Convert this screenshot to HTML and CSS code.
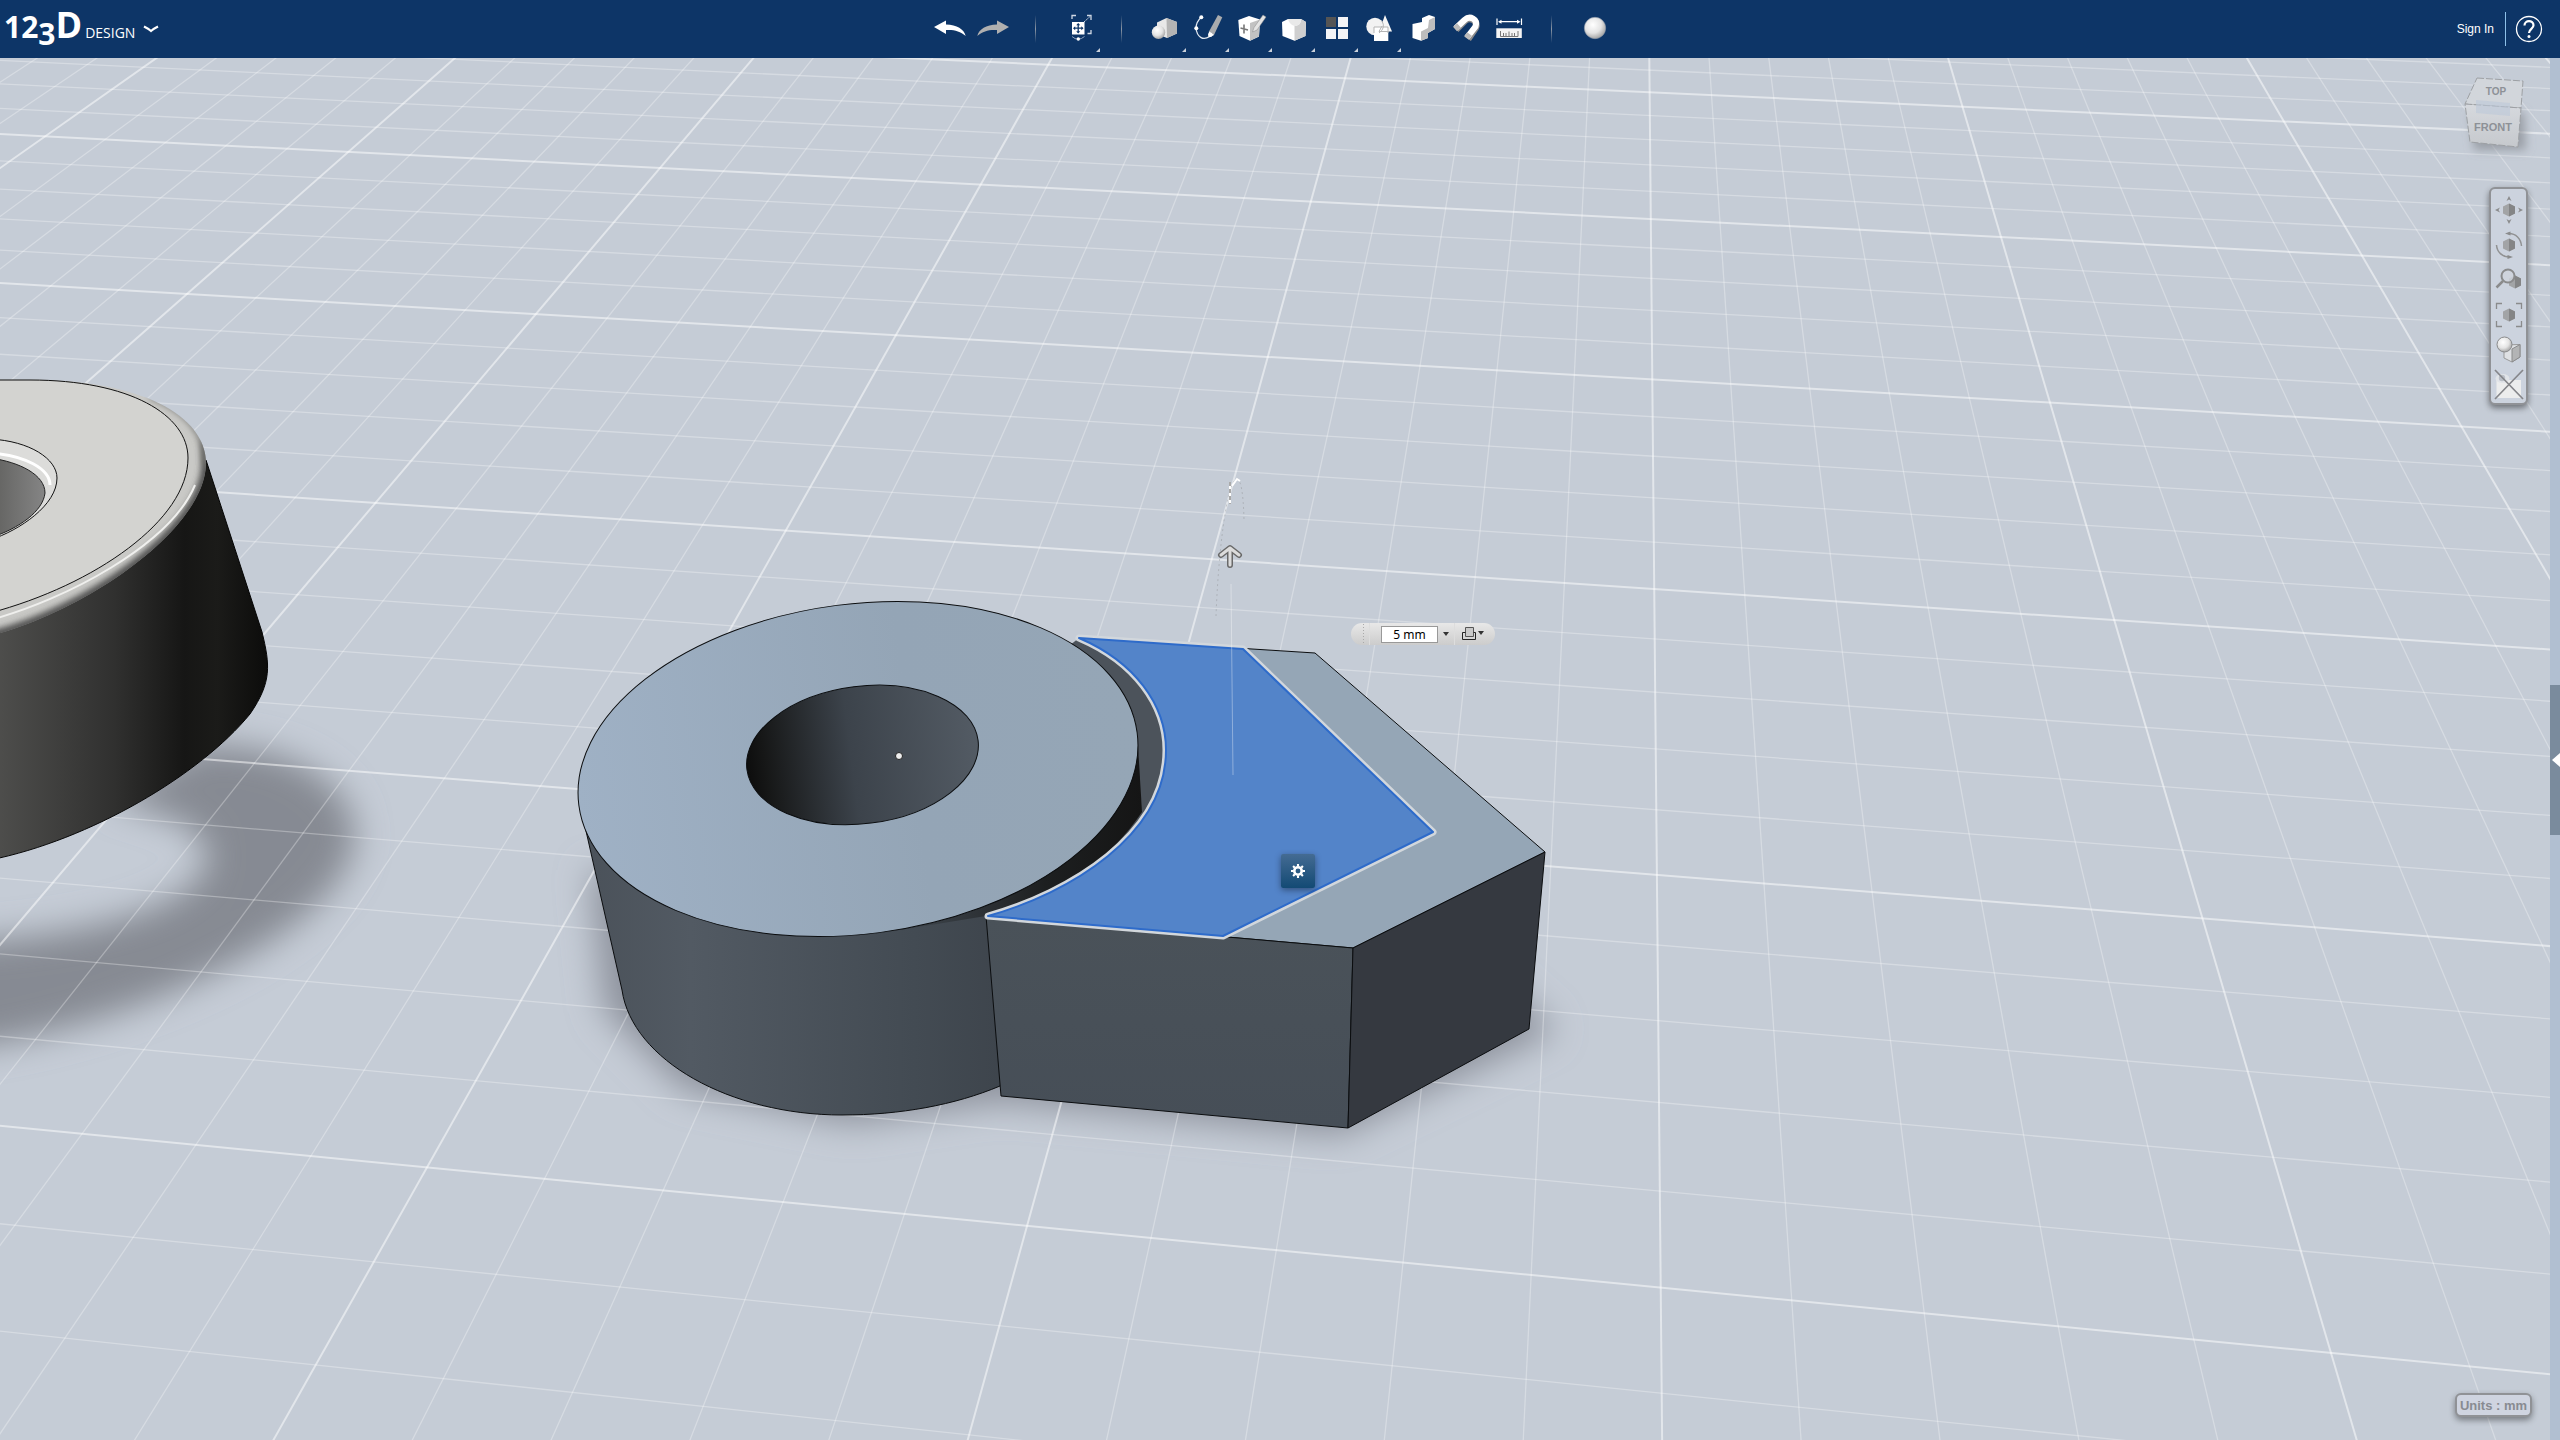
FILE: index.html
```html
<!DOCTYPE html>
<html lang="en">
<head>
    <meta charset="UTF-8">
    <meta name="viewport" content="width=device-width, initial-scale=1.0">
    <title>123D Design</title>
    <link rel="stylesheet" href="styles.css">
</head>
<body>
    <header class="topbar">
        <button class="brand" aria-label="123D Design menu">
            <span class="brand-num">12<span class="brand-low">3</span></span><span class="brand-d">D</span>
            <span class="brand-name">DESIGN</span>
            <svg class="brand-arrow" width="16" height="10" viewBox="0 0 16 10"><path d="M1 2.500Q5 4.500 8 7Q11 4.500 15 2.500" fill="none" stroke="#fff" stroke-width="2.200"/></svg>
        </button>

        <nav class="tools">
            <button class="tool" aria-label="Undo">
                <svg viewBox="0 0 36 36"><path d="M2 16L14 9.500V13.500C25 14 32 18 33.700 25C28 20 22 18.500 14 19V23Z" fill="#fff"/></svg>
            </button>
            <button class="tool" aria-label="Redo">
                <svg viewBox="0 0 36 36"><path d="M34 16L22 9.500V13.500C11 14 4 18 2.300 25C8 20 14 18.500 22 19V23Z" fill="#b0b0b0"/></svg>
            </button>
            <span class="sep"></span>
            <button class="tool has-menu" aria-label="Transform">
                <svg viewBox="0 0 36 36">
                    <path d="M11 8V4.500H15M26 4.500H30V9M30 19V22.500H26.500" fill="none" stroke="#cfd8e4" stroke-width="1.300"/>
                    <path d="M23 11L29 5.500" stroke="#cfd8e4" stroke-dasharray="2 1"/>
                    <rect x="11" y="11" width="12.500" height="12.500" fill="#fff"/>
                    <path d="M17.200 13v8.500M13 17.200h8.500" stroke="#0d3567" stroke-width="1.300"/>
                    <path d="M17.200 12l2 2.200h-4zM17.200 22.500l2-2.200h-4zM12 17.200l2.200-2v4zM22.500 17.200l-2.200-2v4z" fill="#0d3567"/>
                    <path d="M11 25.500Q17 31 23.500 25.500" fill="none" stroke="#8fa3bf"/>
                    <circle cx="17.300" cy="28" r="1.700" fill="#fff"/>
                </svg>
            </button>
            <span class="sep"></span>
            <button class="tool has-menu" aria-label="Primitives">
                <svg viewBox="0 0 36 36">
                    <path d="M19.500 7L30 11V22.500L20 27L10 23V11.500Z" fill="#e8e8e8"/>
                    <path d="M19.500 7L30 11V22.500L20 27Z" fill="#b4b4b4"/>
                    <circle cx="11.500" cy="21.300" r="6.700" fill="url(#ball)"/>
                </svg>
            </button>
            <button class="tool has-menu" aria-label="Sketch">
                <svg viewBox="0 0 36 36">
                    <path d="M11.300 6.300Q6 11 6 17.300C7 26 13 30 19.500 25.500" fill="none" stroke="#dfe6ef" stroke-width="1.300"/>
                    <path d="M28 4L32.300 6.300L24 24L18.500 26.500L19 20.500Z" fill="#a9abad"/>
                    <path d="M19 20.500L24 24L18.500 26.500Z" fill="#fff"/>
                    <circle cx="11.300" cy="6.300" r="2" fill="#fff"/>
                    <circle cx="6.300" cy="17.300" r="2" fill="#fff"/>
                    <circle cx="20.300" cy="23.700" r="2.200" fill="#fff"/>
                </svg>
            </button>
            <button class="tool has-menu" aria-label="Construct">
                <svg viewBox="0 0 36 36">
                    <path d="M16 5L27 8.500L26 25.500L17 29.700L6.500 25L5.300 9Z" fill="#fff"/>
                    <path d="M17 12L27 8.500L26 25.500L17 29.700Z" fill="#c2c2c2"/>
                    <path d="M11 13.500v9M7.500 17l7.500 2" stroke="#777" stroke-width="1.600"/>
                    <path d="M30 4L33 6L24 19L19.500 21L21 16.500Z" fill="#e4e4e4" stroke="#8b8b8b" stroke-width=".500"/>
                </svg>
            </button>
            <button class="tool has-menu" aria-label="Modify">
                <svg viewBox="0 0 36 36">
                    <path d="M6 11L12 8H25L30 11L29.500 25L18.500 29.700L6.500 25Z" fill="#fff"/>
                    <path d="M18.500 15C22 15 25 13 25 8L30 11L29.500 25L18.500 29.700Z" fill="#cfcfcf"/>
                    <path d="M12 8H25C25 13 22 15 18.500 15C15 14 12.500 11 12 8Z" fill="#e9e9e9"/>
                </svg>
            </button>
            <button class="tool has-menu" aria-label="Pattern">
                <svg viewBox="0 0 36 36">
                    <rect x="7" y="6" width="10" height="10" fill="#555"/>
                    <rect x="19" y="6" width="10" height="10" fill="#f4f4f6"/>
                    <rect x="7" y="18" width="10" height="10" fill="#f4f4f6"/>
                    <rect x="19" y="18" width="10" height="10" fill="#f4f4f6"/>
                </svg>
            </button>
            <button class="tool has-menu" aria-label="Grouping">
                <svg viewBox="0 0 36 36">
                    <circle cx="13" cy="15.500" r="8.700" fill="#f2f2f2"/>
                    <path d="M23 4L30 20.500H17Z" fill="#f6f6f6"/>
                    <rect x="12" y="16" width="14.300" height="14" fill="#fff"/>
                    <path d="M12 22V16H26V22M20 10Q24 17 17 22M20 15L17 20.500H27" fill="none" stroke="#b5b5b5"/>
                </svg>
            </button>
            <button class="tool" aria-label="Combine">
                <svg viewBox="0 0 36 36">
                    <path d="M17 7L24 4L30 6V18L23 22V27L16 29.700L7.500 27V13L17 11Z" fill="#fff"/>
                    <path d="M24 9L30 6V18L23 22V27L16 29.700V20.500L23 17Z" fill="#bdbdbd"/>
                </svg>
            </button>
            <button class="tool" aria-label="Snap">
                <svg viewBox="0 0 36 36">
                    <path d="M8 18.500L16.500 10C22 4.500 31 10 27.500 17L20 28" fill="none" stroke="#8a8a8a" stroke-width="7"/>
                    <path d="M8 17L16.500 9C22 4 30 8 27.500 15.500L19 26.500" fill="none" stroke="#fff" stroke-width="6"/>
                    <path d="M7 18L11 14.500M18.500 27L21.500 23" stroke="#bbb" stroke-width="6"/>
                </svg>
            </button>
            <button class="tool" aria-label="Measure">
                <svg viewBox="0 0 36 36">
                    <path d="M6 7.500v6.500M30.500 7.500v6.500M8 10.700h20" stroke="#fff" stroke-width="1.200"/>
                    <path d="M7 10.700l3.500-2v4zM29.500 10.700l-3.500-2v4z" fill="#fff"/>
                    <rect x="5.300" y="17.300" width="25.500" height="9.700" fill="#f4f4f4"/>
                    <path d="M9.500 20v5.500M12.500 22v3.500M15 22v3.500M18 20.500v5M21 22v3.500M23.500 22v3.500M27 20v5.500M9.500 25.500H27" stroke="#777" fill="none"/>
                </svg>
            </button>
            <span class="sep"></span>
            <button class="tool" aria-label="Material">
                <svg viewBox="0 0 36 36"><circle cx="18" cy="17" r="10.700" fill="url(#ball)" stroke="#8b97a8" stroke-width=".600"/></svg>
            </button>
        </nav>

        <div class="account">
            <a href="#signin">Sign In</a>
            <button class="help" aria-label="Help">
                <svg viewBox="0 0 28 28"><circle cx="14" cy="14" r="12.500" fill="none" stroke="#fff" stroke-width="1.300"/><path d="M9.500 10.500C9.500 4.800 18.500 4.800 18.500 10.300C18.500 13.800 14 14 14 18" fill="none" stroke="#fff" stroke-width="2.200"/><circle cx="14" cy="21.500" r="1.500" fill="#fff"/></svg>
            </button>
        </div>
    </header>

    <main class="workspace">
        <section class="canvas">
            <svg class="scene" viewBox="0 58 2550 1382" preserveAspectRatio="xMinYMin slice">
                <defs>
                    <radialGradient id="ball" cx=".4" cy=".35" r=".65"><stop offset="0" stop-color="#fff"/><stop offset=".6" stop-color="#e4e4e4"/><stop offset="1" stop-color="#a8a8a8"/></radialGradient>
                    <linearGradient id="blackSide"><stop offset="0" stop-color="#50504e"/><stop offset=".45" stop-color="#30302f"/><stop offset=".7" stop-color="#161615"/><stop offset=".82" stop-color="#1b1b19"/><stop offset="1" stop-color="#0c0c0b"/></linearGradient>
                    <linearGradient id="blackHole"><stop offset="0" stop-color="#60605e"/><stop offset="1" stop-color="#858585"/></linearGradient>
                    <linearGradient id="side"><stop offset="0" stop-color="#4a5159"/><stop offset=".2" stop-color="#525a63"/><stop offset=".6" stop-color="#434b53"/><stop offset="1" stop-color="#363b42"/></linearGradient>
                    <linearGradient id="top"><stop offset="0" stop-color="#9fb1c5"/><stop offset=".6" stop-color="#94a5b6"/><stop offset="1" stop-color="#95a6b6"/></linearGradient>
                    <linearGradient id="hole"><stop offset="0" stop-color="#0d0d0d"/><stop offset=".08" stop-color="#161717"/><stop offset=".45" stop-color="#3c434b"/><stop offset="1" stop-color="#535b64"/></linearGradient>
                    <linearGradient id="gap"><stop offset="0" stop-color="#414951"/><stop offset=".6" stop-color="#1d1f20"/><stop offset="1" stop-color="#151515"/></linearGradient>
                    <linearGradient id="front" x1="0" y1="0" x2="0" y2="1"><stop offset="0" stop-color="#4a5259"/><stop offset="1" stop-color="#464e57"/></linearGradient>
                    <linearGradient id="cubeFace" x1="0" y1="0" x2="0" y2="1"><stop offset="0" stop-color="#d6d9de"/><stop offset="1" stop-color="#c6c9cd"/></linearGradient>
                    <filter id="soft" x="-30%" y="-30%" width="160%" height="160%"><feGaussianBlur stdDeviation="17"/></filter>
                    <filter id="softSmall" x="-50%" y="-50%" width="200%" height="200%"><feGaussianBlur stdDeviation="5"/></filter>
                    <filter id="softRim" x="-10%" y="-10%" width="120%" height="120%"><feGaussianBlur stdDeviation="3"/></filter>
                    <clipPath id="rimClip"><path d="M-10 379.500H30C140 379.500 207 415 206 465C204 530 85 612 -10 636Z"/></clipPath>
                </defs>

                <!-- shadows on the floor -->
                <path d="M-80 1052C90 1046 358 935 355 832C353 785 290 742 200 745L110 800C190 820 208 835 208 860C195 905 100 938 -80 944Z" fill="#868a93" filter="url(#soft)"/>
                <path d="M590 870L604 1010L684 1090L852 1124L1000 1102L1340 1135L1556 1030L1500 980L900 900Z" fill="#8d929c" filter="url(#soft)"/>

                <g id="grid"></g>

                <!-- black ring -->
                <path d="M-10 560L150 500L206 460L262 632C270 665 272 682 250 714C200 775 90 840 -10 860Z" fill="url(#blackSide)" stroke="#050505"/>
                <g clip-path="url(#rimClip)">
                    <path d="M-10 379.500H30C140 379.500 207 415 206 465C204 530 85 612 -10 636Z" fill="#c9c9c6"/>
                    <path d="M206 440V465C204 530 85 612 -10 636" fill="none" stroke="#4a4a48" stroke-width="9" filter="url(#softRim)"/>
                    <path d="M150 396C190 412 206 435 206 465" fill="none" stroke="#777774" stroke-width="5" filter="url(#softRim)"/>
                    <path d="M195 485C170 545 65 600 -10 620" fill="none" stroke="#efefed" stroke-width="2"/>
                </g>
                <path d="M-10 380H30C130 380 188 415 188 458C188 520 95 585 -10 613Z" fill="#d3d3d0" stroke="#111"/>
                <path d="M-10 439C30 441 57 459 57 478C57 505 20 530 -10 540Z" fill="#dcdcda" stroke="#111"/>
                <path d="M-10 453C25 455 50 469 50 485" fill="none" stroke="#fff" stroke-width="3"/>
                <path d="M-10 458C20 462 45 475 45 493C43 511 20 528 -10 538Z" fill="url(#blackHole)" stroke="#222"/>

                <!-- ring body -->
                <path d="M579 800L622 990C632 1060 730 1115 842 1115C900 1115 955 1105 1000 1086L1138 900L1138 750Z" fill="url(#side)" stroke="#0b0d0f"/>
                <!-- pentagon block -->
                <path d="M986 916L1079 638L1315 653L1545 852L1353 948Z" fill="#95a6b6" stroke="#0b0d0f"/>
                <path d="M1079 638C1135 662 1166 705 1166 750C1166 835 1070 893 986 916L1000 700Z" fill="#4c535b"/>
                <path d="M1138 745L1142 812C1105 868 1050 897 986 916L900 930Z" fill="url(#gap)"/>
                <path d="M986 916L1353 948L1348 1128L1001 1096Z" fill="url(#front)" stroke="#0b0d0f"/>
                <path d="M1353 948L1545 852L1529 1029L1348 1128Z" fill="#353940" stroke="#0b0d0f"/>
                <ellipse cx="858" cy="769" rx="281.500" ry="165" transform="rotate(-7.400 858 769)" fill="url(#top)" stroke="#0b0d0f"/>
                <ellipse cx="862.500" cy="755" rx="116.500" ry="68.700" transform="rotate(-7.200 862 755)" fill="url(#hole)" stroke="#0b0d0f"/>
                <circle cx="899" cy="756" r="3.500" fill="#eee" stroke="#222"/>

                <!-- selected face -->
                <g stroke-linejoin="round">
                    <path d="M1079 638L1243 649L1433 832L1223 936L988 916C1070 893 1166 835 1166 750C1166 705 1135 662 1079 638Z" fill="none" stroke="#d2d7dc" stroke-width="7"/>
                    <path d="M1079 638L1243 649L1433 832L1223 936L988 916C1070 893 1166 835 1166 750C1166 705 1135 662 1079 638Z" fill="#5384c9" stroke="#2e6bca" stroke-width="2"/>
                </g>
                <path d="M1231 584L1233 775" stroke="#fff" stroke-opacity=".35"/>

                <!-- extrude arrow and rotate arc -->
                <path d="M1216 616C1218 560 1226 480 1237 479Q1243 480 1244 520" fill="none" stroke="#777" stroke-opacity=".3" stroke-dasharray="2 3"/>
                <path d="M1230 482V504M1232 486L1237 479L1240 481" fill="none" stroke="#fff" stroke-width="2"/>
                <path d="M1230 482V504" stroke="#555" stroke-width="1" stroke-dasharray="4 3"/>
                <g fill="none" stroke-linecap="round" stroke-linejoin="round">
                    <path d="M1230 565V549M1221 555L1230 548L1239 555" stroke="#686868" stroke-width="6"/>
                    <path d="M1230 565V549M1221 555L1230 548L1239 555" stroke="#dcdcdc" stroke-width="3"/>
                </g>

                <!-- view cube -->
                <path d="M2470 112L2524 112L2526 150L2474 150Z" fill="#888c93" fill-opacity=".7" filter="url(#softSmall)"/>
                <g stroke="#9da0a4" stroke-dasharray="7 2">
                    <path d="M2477 78L2523 81L2521 108L2465 104Z" fill="#d2d6db"/>
                    <path d="M2465 104L2521 108L2518 147L2470 142Z" fill="url(#cubeFace)"/>
                </g>
                <path d="M2476 100L2510 103V116L2476 113Z" fill="#bcc8d8" fill-opacity=".6"/>
                <text class="cube-top" x="2496" y="95">TOP</text>
                <text class="cube-front" x="2493" y="131">FRONT</text>
            </svg>

            <div class="nav-bar">
                <button aria-label="Pan"><svg viewBox="0 0 28 28"><use href="#hex"/><path d="M14 0l2.500 5l-2.500-1.500l-2.500 1.500zM14 28l2.500-5l-2.500 1.500l-2.500-1.500zM0 14l5-2.500l-1.500 2.500l1.500 2.500zM28 14l-5-2.500l1.500 2.500l-1.500 2.500z" fill="#8a8b8c"/></svg></button>
                <button aria-label="Orbit"><svg viewBox="0 0 28 28"><use href="#hex"/><path d="M13 2.500C21 2 26 8 26.500 15M15 26C7 26 2 21 1.500 14" fill="none" stroke="#919293" stroke-width="1.500"/><path d="M10 2.500l5.500-2v4zM18 26l-5.500-2v4z" fill="#8a8b8c"/></svg></button>
                <button aria-label="Zoom"><svg viewBox="0 0 28 28"><use href="#hex" x="6" y="2"/><circle cx="13" cy="10" r="6.500" fill="#cfd4dc" fill-opacity=".8" stroke="#8a8b8c" stroke-width="2"/><path d="M8 15L1.500 21.500" stroke="#8a8b8c" stroke-width="2.500"/></svg></button>
                <button aria-label="Fit"><svg viewBox="0 0 28 28"><use href="#hex"/><path d="M1.500 8V2.500H7M21 2.500H26.500V8M26.500 20V25.500H21M7 25.500H1.500V20" fill="none" stroke="#8a8b8c" stroke-width="1.300"/></svg></button>
                <button aria-label="Display"><svg viewBox="0 0 28 28"><path d="M9 9L25 8.500V21L17 26L9 22Z" fill="#dfe1e4" stroke="#999"/><path d="M25 8.500V21L17 26V13Z" fill="#b3b4b5" stroke="#8a8b8c"/><circle cx="9.500" cy="8.500" r="7.500" fill="url(#ball)" stroke="#8a8b8c"/></svg></button>
                <button aria-label="Hide"><svg viewBox="0 0 28 28"><path d="M1.500 9H26V27H1.500Z" fill="#eceded"/><ellipse cx="7.500" cy="7.500" rx="7" ry="4.500" fill="#e1e4e8"/><circle cx="7" cy="7" r="3.200" fill="#b9bec6"/><path d="M0 -1L28 28M28 -1L0 28" stroke="#85868a" stroke-width="1.700"/></svg></button>
            </div>

            <form class="dim-bar">
                <span class="grip"></span>
                <input class="dim-input" type="text" value="5 mm" aria-label="Distance">
                <button class="dim-drop" type="button" aria-label="Distance options"><svg width="6" height="4" viewBox="0 0 6 4"><path d="M0 0h6L3 4z" fill="#333"/></svg></button>
                <button class="dim-mode" type="button" aria-label="Extrude mode">
                    <svg width="22" height="16" viewBox="0 0 22 16"><path d="M3.500 1.500h8v9h-8z" fill="#c9c9c9" stroke="#555"/><path d="M3.500 6.500h-3v7h13v-7h-2" fill="none" stroke="#222"/><path d="M16 5h6l-3 4z" fill="#333"/></svg>
                </button>
            </form>

            <button class="gear" aria-label="Settings">
                <svg width="14" height="14" viewBox="0 0 12 12"><circle cx="6" cy="6" r="3.200" fill="none" stroke="#fff" stroke-width="2.200"/><path d="M6 0v2M6 10v2M0 6h2M10 6h2M1.800 1.800l1.400 1.400M8.800 8.800l1.400 1.400M1.800 10.200l1.400-1.400M8.800 3.200l1.400-1.400" stroke="#fff" stroke-width="1.800"/></svg>
            </button>

            <button class="units">Units : mm</button>
        </section>

        <aside class="drawer">
            <button class="drawer-handle" aria-label="Open parts panel"><svg width="8" height="14" viewBox="0 0 8 14"><path d="M8 0V14L0 7Z" fill="#fff"/></svg></button>
        </aside>
    </main>

    <svg width="0" height="0" class="symbols">
        <symbol id="hex" viewBox="0 0 28 28" width="28" height="28" overflow="visible"><path d="M14 7.500L20 10.500V17.500L14 20.500L8 17.500V10.500Z" fill="#a2a4a6"/><path d="M14 7.500L20 10.500V17.500L14 20.500Z" fill="#848586"/></symbol>
    </svg>

    <script src="grid.js"></script>
</body>
</html>
```
FILE: styles.css
```css
* {
    margin: 0;
    padding: 0;
    box-sizing: border-box;
}

body {
    font-family: "Liberation Sans", Arial, sans-serif;
    min-height: 100vh;
    display: flex;
    flex-direction: column;
    background: #c5ccd6;
    overflow: hidden;
}

button {
    background: none;
    border: none;
    color: inherit;
    font-family: inherit;
    cursor: pointer;
}

/* Top bar */
.topbar {
    display: grid;
    grid-template-columns: 1fr auto 1fr;
    align-items: center;
    height: 58px;
    background: #0d3567;
    color: #fff;
}

.brand {
    display: flex;
    align-items: baseline;
    justify-self: start;
    padding-left: 4px;
    font-family: "Open Sans", "Noto Sans", sans-serif;
    line-height: 40px;
}

.brand-num {
    font-size: 30px;
    font-weight: 700;
}

.brand-low {
    position: relative;
    top: 7px;
}

.brand-d {
    font-size: 36px;
    font-weight: 700;
}

.brand-name {
    margin-left: 3px;
    font-size: 14px;
}

.brand-arrow {
    margin-left: 8px;
    align-self: center;
}

.tools {
    display: flex;
    align-items: center;
    padding-right: 16px;
}

.tool {
    position: relative;
    width: 43px;
    height: 58px;
    display: flex;
    align-items: center;
    justify-content: center;
}

.tool svg {
    width: 36px;
    height: 36px;
}

.has-menu::after {
    content: "";
    position: absolute;
    right: 0;
    bottom: 6px;
    border-left: 4px solid transparent;
    border-bottom: 4px solid #c9d0da;
}

.sep {
    width: 43px;
    height: 28px;
    background: linear-gradient(transparent, #8c97a5, transparent) center / 1px 100% no-repeat;
}

.account {
    display: flex;
    align-items: center;
    justify-self: end;
    height: 34px;
    padding-right: 17px;
}

.account a {
    padding-right: 11px;
    border-right: 1px solid #8dc0e8;
    color: #fff;
    font-size: 12px;
    line-height: 34px;
    text-decoration: none;
}

.help {
    width: 28px;
    height: 28px;
    margin-left: 9px;
}

/* Workspace */
.workspace {
    flex: 1;
    display: flex;
    min-height: 0;
}

.canvas {
    position: relative;
    flex: 1;
    min-width: 0;
    overflow: hidden;
    background: #c5ccd6;
}

.scene {
    position: absolute;
    width: 100%;
    height: 100%;
}

.grid-minor {
    stroke: #fff;
    stroke-opacity: 0.3;
    stroke-width: 1.3;
}

.grid-major {
    stroke: #fff;
    stroke-opacity: 0.5;
    stroke-width: 2;
}

.cube-top,
.cube-front {
    fill: #8d9197;
    font-weight: 700;
    text-anchor: middle;
}

.cube-top {
    font-size: 10px;
}

.cube-front {
    font-size: 11px;
}

.nav-bar {
    position: absolute;
    top: 129px;
    right: 22px;
    width: 39px;
    display: flex;
    flex-direction: column;
    padding: 3px 0 1px;
    background: #ccd3de;
    border: 2px solid #909296;
    border-radius: 6px;
    box-shadow: 0 3px 6px rgba(0, 0, 0, 0.45);
}

.nav-bar button {
    height: 35px;
    display: flex;
    align-items: center;
    justify-content: center;
}

.nav-bar svg {
    width: 28px;
    height: 28px;
    overflow: visible;
}

.dim-bar {
    position: absolute;
    left: 1351px;
    top: 565px;
    width: 144px;
    height: 22px;
    display: flex;
    align-items: center;
    border-radius: 11px;
    background: linear-gradient(#e8e8e8, #cccccc);
}

.grip {
    width: 19px;
    height: 22px;
    margin-right: 11px;
    border-right: 1px solid #ddd;
    background: radial-gradient(#aaa 1px, transparent 1px) 11px 0 / 3px 3px repeat-y;
}

.dim-input {
    width: 57px;
    height: 17px;
    border: 1px solid #999;
    background: #fff;
    color: #000;
    font-family: "Noto Sans", sans-serif;
    font-size: 12px;
    line-height: 14px;
    text-align: center;
}

.dim-drop {
    width: 17px;
    height: 22px;
    display: flex;
    align-items: center;
    justify-content: center;
    border-right: 1px solid #ddd;
}

.dim-mode {
    height: 22px;
    padding-left: 7px;
    display: flex;
    align-items: center;
}

.gear {
    position: absolute;
    left: 1281px;
    top: 796px;
    width: 34px;
    height: 34px;
    display: flex;
    align-items: center;
    justify-content: center;
    border-radius: 2px;
    background: linear-gradient(#446b93, #134a74);
    box-shadow: 0 2px 6px rgba(0, 0, 0, 0.4);
}

.units {
    position: absolute;
    right: 18px;
    bottom: 23px;
    width: 77px;
    height: 24px;
    border: 2px solid #909296;
    border-radius: 6px;
    background: #cfd4e0;
    box-shadow: 0 3px 6px rgba(0, 0, 0, 0.4);
    color: #888b91;
    font-size: 13px;
    font-weight: 700;
    white-space: nowrap;
}

/* Collapsed panel on the right */
.drawer {
    width: 10px;
    padding-top: 627px;
    background: #b1bfd1;
}

.drawer-handle {
    width: 10px;
    height: 150px;
    display: flex;
    align-items: center;
    justify-content: flex-end;
    background: #7a8b9d;
}

.symbols {
    position: absolute;
}
```
FILE: grid.js
```js
// Screen corners of a 4 x 4 block of major cells on the floor
const corners = {
    x00: 660, y00: 168,
    x10: 2001, y10: 237,
    x11: 2331, y11: 1353,
    x01: -142, y01: 1112
};

const SVG_NS = 'http://www.w3.org/2000/svg';

// Perspective mapping from floor units to the screen
function makeProjection(c) {
    const dx1 = c.x10 - c.x11, dx2 = c.x01 - c.x11;
    const dy1 = c.y10 - c.y11, dy2 = c.y01 - c.y11;
    const sx = c.x00 - c.x10 + c.x11 - c.x01;
    const sy = c.y00 - c.y10 + c.y11 - c.y01;
    const den = dx1 * dy2 - dx2 * dy1;
    const g = (sx * dy2 - dx2 * sy) / den;
    const h = (dx1 * sy - sx * dy1) / den;

    return function (u, v) {
        const s = (u + 3) / 4;
        const t = (v - 2) / 4;
        const w = 1 + g * s + h * t;
        return [
            ((c.x10 - c.x00 + g * c.x10) * s + (c.x01 - c.x00 + h * c.x01) * t + c.x00) / w,
            ((c.y10 - c.y00 + g * c.y10) * s + (c.y01 - c.y00 + h * c.y01) * t + c.y00) / w
        ];
    };
}

function addLine(parent, from, to, major) {
    const line = document.createElementNS(SVG_NS, 'line');
    line.setAttribute('x1', from[0]);
    line.setAttribute('y1', from[1]);
    line.setAttribute('x2', to[0]);
    line.setAttribute('y2', to[1]);
    line.setAttribute('class', major ? 'grid-major' : 'grid-minor');
    parent.appendChild(line);
}

const grid = document.getElementById('grid');
const project = makeProjection(corners);

// Five minor cells to each major one
for (let i = -40; i <= 20; i++) {
    addLine(grid, project(i / 5, -1), project(i / 5, 7.4), i % 5 === 0);
}
for (let j = -5; j <= 37; j++) {
    addLine(grid, project(-8, j / 5), project(4, j / 5), j % 5 === 0);
}
```
